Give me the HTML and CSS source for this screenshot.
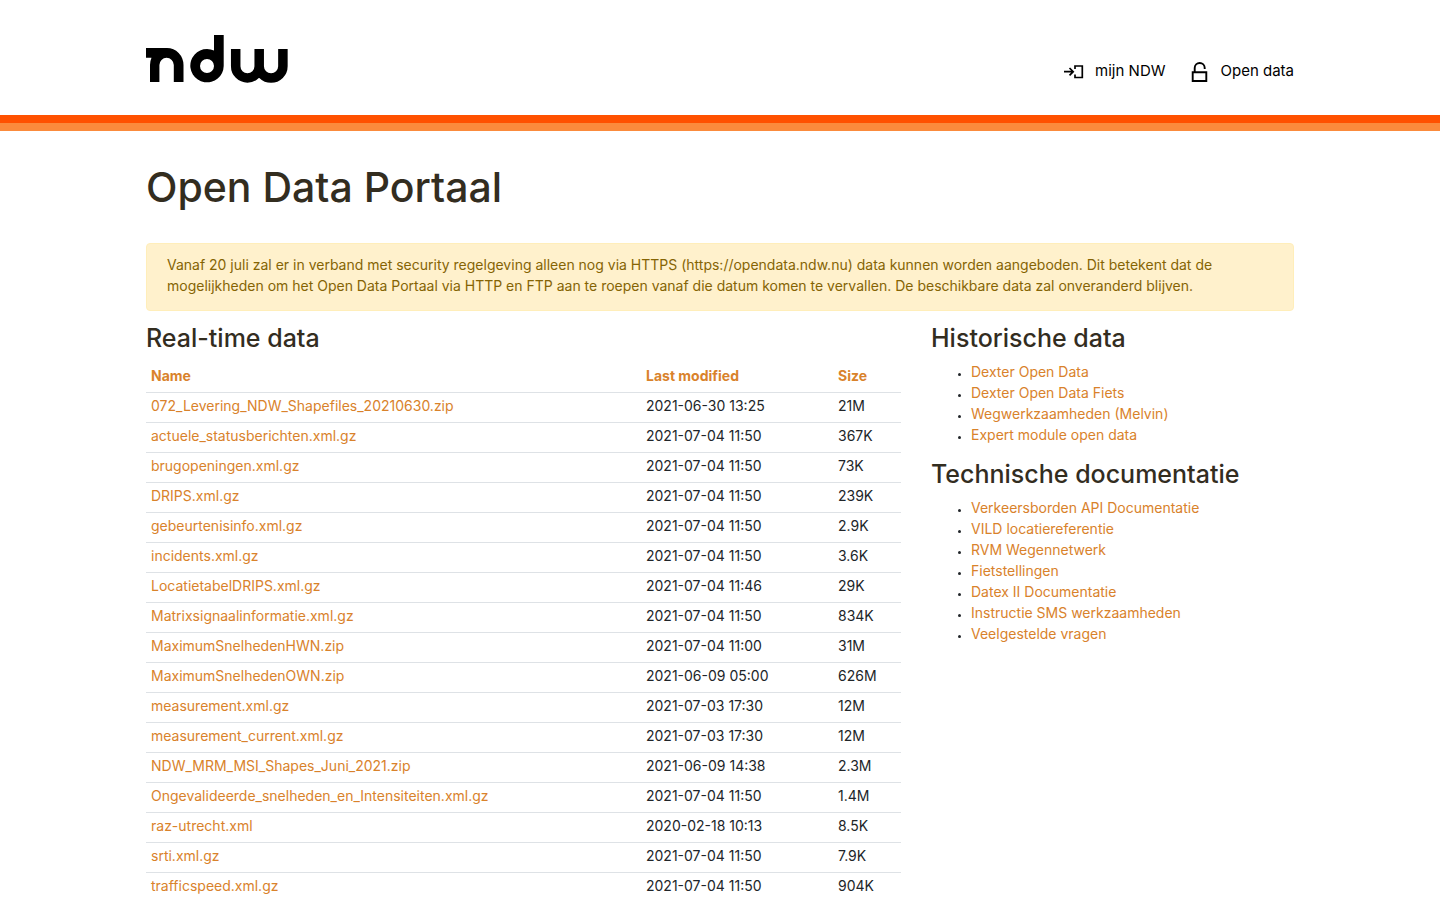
FILE: index.html
```html
<!DOCTYPE html>
<html lang="nl">
<head>
<meta charset="utf-8">
<meta name="viewport" content="width=device-width, initial-scale=1">
<title>Open Data Portaal</title>
<link rel="stylesheet" href="styles.css">
</head>
<body>
<header class="site-header">
  <div class="container header-inner">
    <a class="logo" href="#" aria-label="NDW">
      <svg width="142" height="48" viewBox="146 35 142 48" aria-hidden="true">
        <path d="M146 48h21a16.500 17 0 0 1 16.500 17v17h-9.700V65a7.200 7.200 0 0 0-14.400 0v17H150V65q0-4 1.500-7.300H146z"/>
        <path fill-rule="evenodd" d="M214 35h9.700v31a16.700 16.700 0 1 1-9.700-15.500zM207 59a7 7 0 1 0 0 14a7 7 0 1 0 0-14z"/>
        <path d="M235.700 49v17.200a11.700 11.700 0 0 0 23.500 0V49v17.200a11.700 11.700 0 0 0 23.700 0V49" fill="none" stroke="#000" stroke-width="9.500"/>
      </svg>
    </a>
    <nav class="top-nav">
      <a class="nav-link" href="#">
        <svg width="20" height="24" viewBox="0 0 20 24" fill="none" stroke="#000" stroke-width="1.700" aria-hidden="true"><path d="M0 13.700h9M5.500 10L9.200 13.700L5.500 17.400M11 11V8h7.300v11.500H11v-3"/></svg>
        <span>mijn NDW</span>
      </a>
      <a class="nav-link" href="#">
        <svg width="20" height="24" viewBox="0 0 20 24" fill="none" stroke="#000" stroke-width="1.900" aria-hidden="true"><path d="M2.700 14.300h13.600V23H2.700zM4.700 14V10a5 5 0 0 1 10 0v1"/></svg>
        <span>Open data</span>
      </a>
    </nav>
  </div>
</header>
<main class="container">
  <h1 class="page-title">Open Data Portaal</h1>
  <div class="notice" role="alert">Vanaf 20 juli zal er in verband met security regelgeving alleen nog via HTTPS (https://opendata.ndw.nu) data kunnen worden aangeboden. Dit betekent dat de<br>mogelijkheden om het Open Data Portaal via HTTP en FTP aan te roepen vanaf die datum komen te vervallen. De beschikbare data zal onveranderd blijven.</div>
  <div class="columns">
    <section>
      <h2 class="section-title">Real-time data</h2>
      <table class="files">
        <colgroup><col><col class="col-date"><col class="col-size"></colgroup>
        <thead><tr><th><a href="#">Name</a></th><th><a href="#">Last modified</a></th><th><a href="#">Size</a></th></tr></thead>
        <tbody>
          <tr><td><a href="#">072_Levering_NDW_Shapefiles_20210630.zip</a></td><td>2021-06-30 13:25</td><td>21M</td></tr>
          <tr><td><a href="#">actuele_statusberichten.xml.gz</a></td><td>2021-07-04 11:50</td><td>367K</td></tr>
          <tr><td><a href="#">brugopeningen.xml.gz</a></td><td>2021-07-04 11:50</td><td>73K</td></tr>
          <tr><td><a href="#">DRIPS.xml.gz</a></td><td>2021-07-04 11:50</td><td>239K</td></tr>
          <tr><td><a href="#">gebeurtenisinfo.xml.gz</a></td><td>2021-07-04 11:50</td><td>2.9K</td></tr>
          <tr><td><a href="#">incidents.xml.gz</a></td><td>2021-07-04 11:50</td><td>3.6K</td></tr>
          <tr><td><a href="#">LocatietabelDRIPS.xml.gz</a></td><td>2021-07-04 11:46</td><td>29K</td></tr>
          <tr><td><a href="#">Matrixsignaalinformatie.xml.gz</a></td><td>2021-07-04 11:50</td><td>834K</td></tr>
          <tr><td><a href="#">MaximumSnelhedenHWN.zip</a></td><td>2021-07-04 11:00</td><td>31M</td></tr>
          <tr><td><a href="#">MaximumSnelhedenOWN.zip</a></td><td>2021-06-09 05:00</td><td>626M</td></tr>
          <tr><td><a href="#">measurement.xml.gz</a></td><td>2021-07-03 17:30</td><td>12M</td></tr>
          <tr><td><a href="#">measurement_current.xml.gz</a></td><td>2021-07-03 17:30</td><td>12M</td></tr>
          <tr><td><a href="#">NDW_MRM_MSI_Shapes_Juni_2021.zip</a></td><td>2021-06-09 14:38</td><td>2.3M</td></tr>
          <tr><td><a href="#">Ongevalideerde_snelheden_en_Intensiteiten.xml.gz</a></td><td>2021-07-04 11:50</td><td>1.4M</td></tr>
          <tr><td><a href="#">raz-utrecht.xml</a></td><td>2020-02-18 10:13</td><td>8.5K</td></tr>
          <tr><td><a href="#">srti.xml.gz</a></td><td>2021-07-04 11:50</td><td>7.9K</td></tr>
          <tr><td><a href="#">trafficspeed.xml.gz</a></td><td>2021-07-04 11:50</td><td>904K</td></tr>
        </tbody>
      </table>
    </section>
    <aside>
      <h2 class="section-title">Historische data</h2>
      <ul class="links">
        <li><a href="#">Dexter Open Data</a></li>
        <li><a href="#">Dexter Open Data Fiets</a></li>
        <li><a href="#">Wegwerkzaamheden (Melvin)</a></li>
        <li><a href="#">Expert module open data</a></li>
      </ul>
      <h2 class="section-title">Technische documentatie</h2>
      <ul class="links">
        <li><a href="#">Verkeersborden API Documentatie</a></li>
        <li><a href="#">VILD locatiereferentie</a></li>
        <li><a href="#">RVM Wegennetwerk</a></li>
        <li><a href="#">Fietstellingen</a></li>
        <li><a href="#">Datex II Documentatie</a></li>
        <li><a href="#">Instructie SMS werkzaamheden</a></li>
        <li><a href="#">Veelgestelde vragen</a></li>
      </ul>
    </aside>
  </div>
</main>
</body>
</html>
```
FILE: styles.css
```css
* { box-sizing: border-box; }
body {
  margin: 0;
  background: #fff;
  color: #212529;
  font: 400 14px/21px Inter, "Liberation Sans", sans-serif;
}
a { color: #d9822b; text-decoration: none; }
.container { max-width: 1178px; margin: 0 auto; padding: 0 15px; }
.site-header { border-bottom: 8px solid #ff5100; box-shadow: 0 8px #fb8b3c; }
.header-inner { display: flex; justify-content: space-between; padding-top: 35px; padding-bottom: 32px; }
.logo, .logo svg { display: block; }
.top-nav { display: flex; align-items: center; gap: 24px; padding-top: 22px; }
.nav-link { display: flex; align-items: center; gap: 11px; color: #000; font-size: 15px; }
.page-title { margin: 40px 0 32px; color: #332d1f; font-size: 41px; line-height: 48px; font-weight: 500; }
.notice {
  margin-bottom: 13px;
  padding: 10px 20px 14px;
  border: 1px solid #ffeeba;
  border-radius: 4px;
  background: #fff1cc;
  color: #856404;
}
.columns { display: grid; grid-template-columns: 755fr 363fr; gap: 30px; }
.section-title { margin: 0 0 8px; color: #332d1f; font-size: 25px; line-height: 29px; font-weight: 500; }
.files { width: 100%; border-collapse: collapse; table-layout: fixed; }
.col-date { width: 192px; }
.col-size { width: 68px; }
.files th, .files td { padding: 2px 5px 6px; text-align: left; border-bottom: 1px solid #dee2e6; white-space: nowrap; }
.files th { padding-top: 4px; font-weight: 700; }
.links { margin: 0 0 15px; padding-left: 40px; }
.links li::marker { font-size: 10px; }
```
